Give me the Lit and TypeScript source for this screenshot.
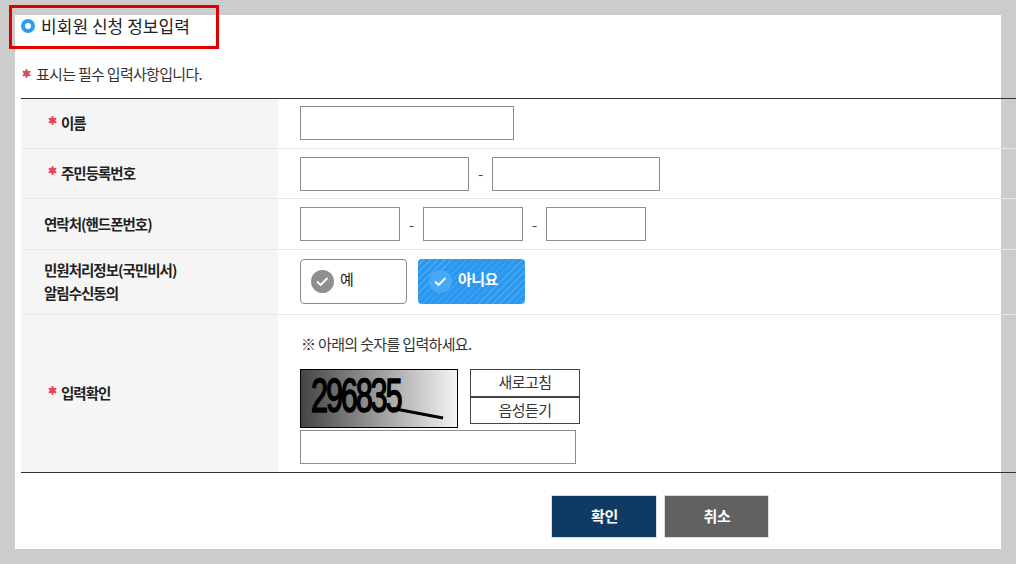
import { LitElement, html, css, svg } from "lit";
import { customElement } from "lit/decorators.js";

const star = html`<svg class="star" width="9" height="9" viewBox="0 0 9 9"><g stroke="#e2475c" stroke-width="2" stroke-linecap="round"><path d="M4.5 1V8M1.5 2.7 7.5 6.3M7.5 2.7 1.5 6.3"/></g><circle cx="4.5" cy="4.5" r="2.8" fill="#e2475c"/></svg>`;
const check = svg`<path d="M6 11.5l3.6 3.4L16.5 8" fill="none" stroke="#fff" stroke-width="1.8"/>`;

@customElement("app-root")
export class AppRoot extends LitElement {
  static styles = css`
    :host { display: block; width: 1016px; height: 564px; background: #ccc; overflow: hidden; position: relative;
      font-family: "Noto Sans CJK KR", "Noto Sans", sans-serif; color: #222; }
    .outer { padding: 15px; height: 564px; box-sizing: border-box; }
    .panel { background: #fff; height: 534px; padding: 0 0 0 6px; box-sizing: border-box; }
    .title { display: flex; align-items: center; gap: 6px; height: 22px; font-size: 17px; letter-spacing: 0.05px; color: #222; margin: 0; font-weight: 400; line-height: 22px; }
    .dot { width: 14px; height: 14px; border-radius: 50%; border: 4px solid #2e9bf3; box-sizing: border-box; background: #fff; }
    .note { display: flex; align-items: center; gap: 5px; height: 20px; margin-top: 26px; font-size: 15px; letter-spacing: -0.7px; color: #333; }
    .note .star { margin-left: 1px; }
    .table { width: 995px; margin-top: 15px; border-top: 1px solid #333; border-bottom: 1px solid #333; }
    .row { display: grid; grid-template-columns: 257px 1fr; border-bottom: 1px solid #e8e8e8; box-sizing: border-box; }
    .row:last-child { border-bottom: 0; }
    .h { background: #f5f5f5; display: flex; align-items: center; font-size: 14.5px; font-weight: 700; letter-spacing: -1px; color: #222; padding-left: 23px; padding-bottom: 2px; line-height: 23px; }
    .h.req { padding-left: 27px; gap: 4px; }
    .h.req .star { margin-top: -5px; }
    .c { padding-left: 22px; display: flex; align-items: center; font-size: 15px; color: #333; }
    input { box-sizing: border-box; border: 1px solid #8c8c8c; background: #fff; height: 34px; margin: 0; padding: 0; display: block; border-radius: 0; }
    .sep { text-align: center; color: #444; letter-spacing: 0; }
    .r1 { height: 50px; } .r2 { height: 50px; } .r3 { height: 51px; } .r4 { height: 65px; } .r5 { height: 157px; }
    .r1 .c { padding-bottom: 1px; }
    .r4 .c { padding-bottom: 2px; }
    .r5 .c { padding-top: 10px; }
    .pick { box-sizing: border-box; height: 45px; width: 107px; border: 1px solid #8a8a8a; border-radius: 4px; display: flex; align-items: center; gap: 6px; padding: 0 0 0 10px; font-size: 15px; letter-spacing: -0.5px; background: #fff; color: #222; margin-right: 11px; }
    .pick span { margin-top: -6px; }
    .pick svg { display: block; }
    .pick.on { border: 0; padding-left: 11px; color: #fff; font-weight: 700; background: repeating-linear-gradient(135deg, #2b97ef 0 4px, #4aa9f4 4px 5px); }
    .cap { display: flex; flex-direction: column; align-items: flex-start; }
    .hint { font-size: 15px; letter-spacing: -0.66px; color: #333; line-height: 20px; height: 20px; padding-left: 1px; }
    .capt { display: flex; margin-top: 15px; gap: 12px; }
    .img { box-sizing: border-box; width: 158px; height: 59px; border: 1px solid #000; background: linear-gradient(90deg, #444, #f4f4f4); display: block; }
    .btns { display: flex; flex-direction: column; width: 110px; }
    .btns div { box-sizing: border-box; width: 110px; height: 27px; border: 1px solid #444; font-size: 15px; text-align: center; line-height: 23px; letter-spacing: -0.5px; color: #333; background: #fff; }
    .btns div:first-child { height: 28px; }
    .in3 { width: 276px; margin-top: 2px; }
    .foot { display: flex; gap: 7px; margin-top: 22px; padding-left: 530px; }
    .btn { box-sizing: border-box; height: 43px; border: 1px solid #ddd; color: #fff; font-size: 15px; font-weight: 700; text-align: center; line-height: 39px; letter-spacing: -0.4px; padding-left: 1px; }
    .b1 { width: 106px; background: #0f3a64; }
    .b2 { width: 105px; background: #616161; }
    .red { position: absolute; left: 9px; top: 5px; width: 210px; height: 44px; box-sizing: border-box; border: 3px solid #de0000; }
    .digits { font-family: "Liberation Sans", sans-serif; font-size: 48px; letter-spacing: -3.4px; }
  `;
  render() {
    return html`<div class="outer"><div class="panel">
      <h2 class="title"><i class="dot"></i>비회원 신청 정보입력</h2>
      <div class="note">${star}표시는 필수 입력사항입니다.</div>
      <div class="table">
        <div class="row r1"><div class="h req">${star}이름</div><div class="c"><input style="width:214px" /></div></div>
        <div class="row r2"><div class="h req">${star}주민등록번호</div><div class="c"><input style="width:169px" /><span class="sep" style="width:23px">-</span><input style="width:168px" /></div></div>
        <div class="row r3"><div class="h">연락처(핸드폰번호)</div><div class="c"><input style="width:100px" /><span class="sep" style="width:23px">-</span><input style="width:100px" /><span class="sep" style="width:23px">-</span><input style="width:100px" /></div></div>
        <div class="row r4"><div class="h"><div>민원처리정보(국민비서)<br />알림수신동의</div></div><div class="c">
          <div class="pick"><svg width="23" height="23" viewBox="0 0 23 23"><circle cx="11.5" cy="11.5" r="11.5" fill="#8f8f8f"/>${check}</svg><span>예</span></div>
          <div class="pick on"><svg width="23" height="23" viewBox="0 0 23 23"><circle cx="11.5" cy="11.5" r="11.5" fill="#46a8f6"/>${check}</svg><span>아니요</span></div>
        </div></div>
        <div class="row r5"><div class="h req">${star}입력확인</div><div class="c"><div class="cap">
          <div class="hint">※ 아래의 숫자를 입력하세요.</div>
          <div class="capt">
            <svg class="img" viewBox="0 0 156 57"><text class="digits" transform="translate(10 42) scale(0.64 1)" stroke="#000" stroke-width="1.6" fill="#000">296835</text><path d="M92 38.5 142 48" stroke="#000" stroke-width="3"/></svg>
            <div class="btns"><div>새로고침</div><div>음성듣기</div></div>
          </div>
          <input class="in3" />
        </div></div></div>
      </div>
      <div class="foot"><div class="btn b1">확인</div><div class="btn b2">취소</div></div>
    </div></div><div class="red"></div>`;
  }
}
